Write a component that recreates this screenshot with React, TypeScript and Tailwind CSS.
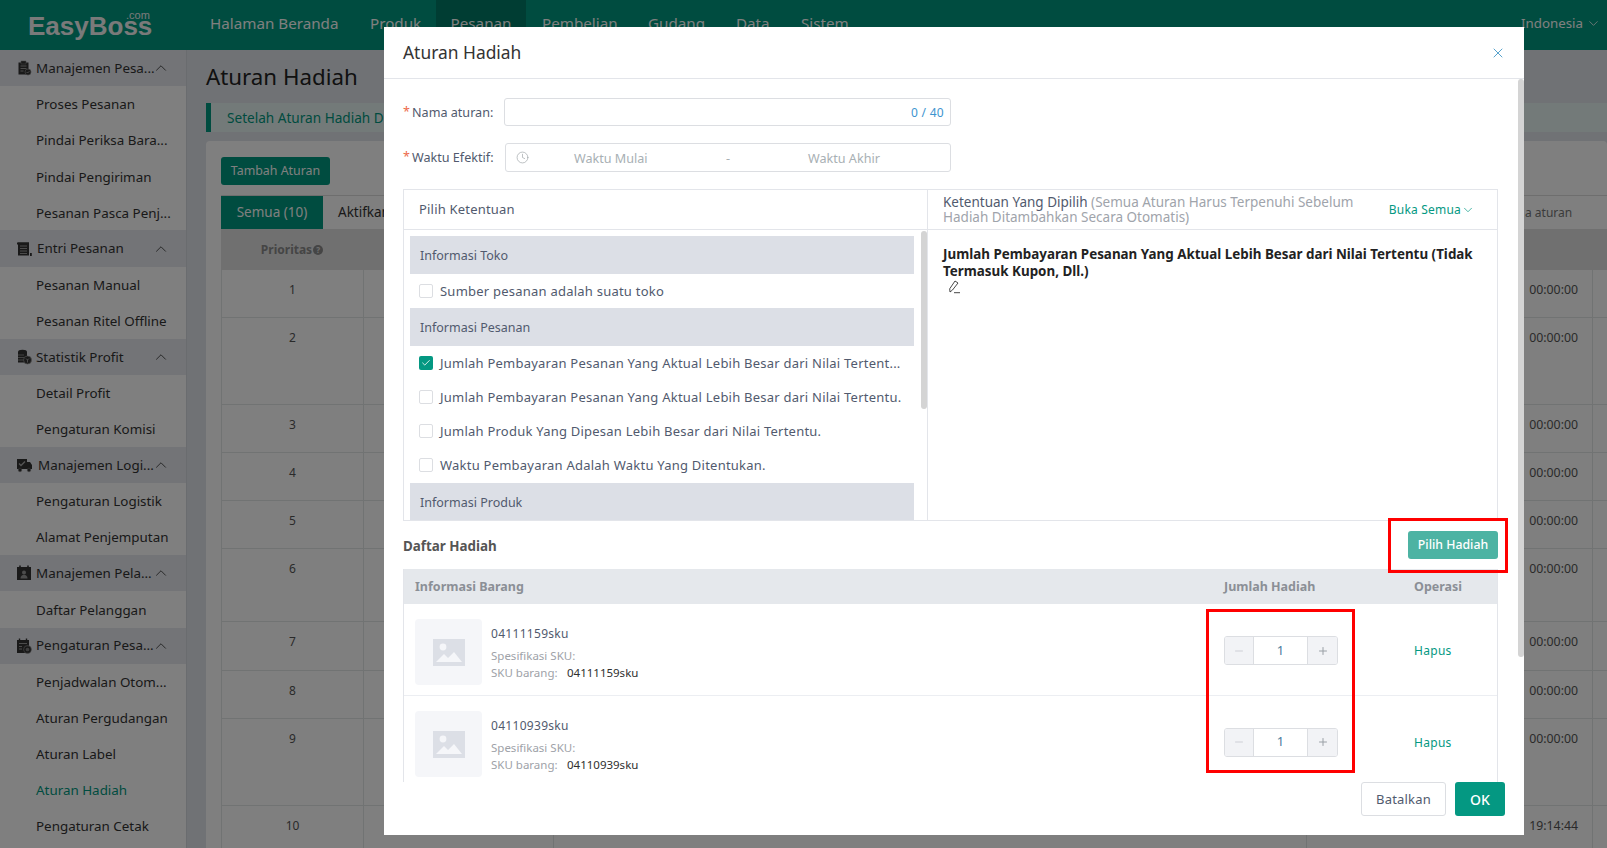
import React from "react";
import { ChevronUp, ChevronDown, Check, X, Clock, Plus, Minus } from "lucide-react";

const Ic = ({ k }: { k: number }) => {
  const paths = [
    <g key="0"><path d="M2.5 2.5h10v12h-10z" fill="#333" /><path d="M5 1h5v3H5z" fill="#333" stroke="#888" strokeWidth=".5" /><path d="M4.5 6h6M4.5 8.5h6M4.5 11h3" stroke="#999" strokeWidth="1" /><circle cx="12" cy="12" r="3" fill="#333" stroke="#888" strokeWidth=".7" /><path d="M10.6 12l1 1 1.8-1.8" stroke="#aaa" strokeWidth=".8" fill="none" /></g>,
    <g key="1"><path d="M2 1.5h11v13H2z" fill="#333" /><path d="M1 1.5h12v2H1z" fill="#333" /><path d="M4 5h7M4 7.5h7M4 10h7M4 12.5h7" stroke="#999" strokeWidth="1" /><rect x="14" y="12" width="1.8" height="3" fill="#333" /></g>,
    <g key="2"><ellipse cx="6.5" cy="3" rx="4.5" ry="2.2" fill="#333" /><path d="M2 3h9v10.5H2z" fill="#333" /><path d="M2 6h6M2 8.5h6M2 11h6" stroke="#999" strokeWidth=".8" /><circle cx="11.5" cy="11" r="4" fill="#333" stroke="#999" strokeWidth=".7" /><path d="M10 9.5l1.5 1.5 1.500-1.500M11.500 11v2.500" stroke="#bbb" strokeWidth=".7" fill="none" /></g>,
    <g key="3"><path d="M1 2h10v10H1z" fill="#333" /><path d="M11 5h3l2 3v4h-5z" fill="#333" /><circle cx="4" cy="13" r="1.8" fill="#333" stroke="#888" strokeWidth=".4" /><circle cx="13" cy="13" r="1.8" fill="#333" stroke="#888" strokeWidth=".4" /><path d="M3 6.5l2 2 4-4" stroke="#aaa" strokeWidth="1.3" fill="none" /></g>,
    <g key="4"><path d="M1 2h14v13H1z" fill="#333" /><path d="M4 .5v3M12 .5v3" stroke="#333" strokeWidth="1.6" /><circle cx="8" cy="7.5" r="2" fill="#999" /><path d="M4.5 13.5c0-5 7-5 7 0z" fill="#999" /></g>,
    <g key="5"><path d="M1 2h12v13H1z" fill="#333" /><path d="M3.5 .5v3M10.5 .5v3" stroke="#333" strokeWidth="1.4" /><path d="M3 5.5h8M3 8.5h3M3 11h3" stroke="#999" strokeWidth="1" /><circle cx="11.5" cy="11.5" r="4.2" fill="#7a7a7a" /><circle cx="11.5" cy="11.5" r="2.6" fill="none" stroke="#333" strokeWidth="1.5" /></g>,
  ];
  return <svg viewBox="0 0 16 16" className="w-[16px] h-[16px] shrink-0">{paths[k]}</svg>;
};

const menu: { t: string; k: number; items: string[] }[] = [
  { t: "Manajemen Pesa...", k: 0, items: ["Proses Pesanan", "Pindai Periksa Bara...", "Pindai Pengiriman", "Pesanan Pasca Penj..."] },
  { t: "Entri Pesanan", k: 1, items: ["Pesanan Manual", "Pesanan Ritel Offline"] },
  { t: "Statistik Profit", k: 2, items: ["Detail Profit", "Pengaturan Komisi"] },
  { t: "Manajemen Logi...", k: 3, items: ["Pengaturan Logistik", "Alamat Penjemputan"] },
  { t: "Manajemen Pela...", k: 4, items: ["Daftar Pelanggan"] },
  { t: "Pengaturan Pesa...", k: 5, items: ["Penjadwalan Otom...", "Aturan Pergudangan", "Aturan Label", "Aturan Hadiah", "Pengaturan Cetak"] },
];

const rows = [
  ["1", 48, "00:00:00"], ["2", 87, "00:00:00"], ["3", 48, "00:00:00"], ["4", 48, "00:00:00"], ["5", 48, "00:00:00"],
  ["6", 73, "00:00:00"], ["7", 49, "00:00:00"], ["8", 48, "00:00:00"], ["9", 87, "00:00:00"], ["10", 60, "19:14:44"],
] as const;

const Placeholder = () => (
  <div className="w-[67px] h-[66px] bg-[#f5f6f9] rounded-[4px] flex items-center justify-center shrink-0">
    <svg viewBox="0 0 32 27" className="w-[32px] h-[27px]">
      <rect width="32" height="27" fill="#dcdfe6" />
      <circle cx="10" cy="8" r="3.4" fill="#f5f6f9" />
      <path d="M3 23l8-8 4 4 6-6 8 10z" fill="#f5f6f9" />
    </svg>
  </div>
);

const Box = ({ on }: { on?: boolean }) =>
  on ? (
    <span className="w-[14px] h-[14px] bg-[#049882] rounded-[2px] flex items-center justify-center shrink-0">
      <Check size={10} strokeWidth={2} color="#fff" />
    </span>
  ) : (
    <span className="w-[14px] h-[14px] bg-white border border-[#dcdee2] rounded-[2px] shrink-0" />
  );

const Group = ({ t, last }: { t: string; last?: boolean }) => (
  <div className={`h-[38px] ml-[6px] mr-[13px] bg-[#dcdfe6] flex items-center pl-[10px] pt-[2px] text-[12.5px] text-[#515a6e] shrink-0 ${last ? "mt-[1px]" : ""}`}>{t}</div>
);
const Opt = ({ t, on }: { t: string; on?: boolean }) => (
  <div className="h-[34px] flex items-center gap-[7px] pl-[15px] text-[13px] tracking-[0.23px] text-[#515a6e] shrink-0 whitespace-nowrap">
    <Box on={on} />
    <span className="pt-[2px]">{t}</span>
  </div>
);

const Stepper = () => (
  <div className="w-[114px] h-[29px] border border-[#dcdee2] rounded-[3px] flex text-[13px] overflow-hidden">
    <div className="w-[29px] bg-[#f2f3f6] flex items-center justify-center border-r border-[#dcdee2]"><Minus size={12} strokeWidth={1.8} color="#c9ccd2" /></div>
    <div className="flex-1 flex items-center justify-center text-[#4a7c9e]">1</div>
    <div className="w-[30px] bg-[#f2f3f6] flex items-center justify-center border-l border-[#dcdee2]"><Plus size={12} strokeWidth={2} color="#9aa0a6" /></div>
  </div>
);

const Gift = ({ sku, first }: { sku: string; first?: boolean }) => (
  <div className={`flex border-b border-[#eceef2] ${first ? "h-[92px]" : "h-[91px]"}`}>
    <div className="flex-1 flex items-start pt-[15px] pl-[11px] gap-[9px]">
      <Placeholder />
      <div className="flex flex-col pt-[6px] text-[#9ea2a8] text-[11.5px] leading-[17px]">
        <div className="text-[12px] tracking-[0.3px] text-[#515a6e] mb-[5px]">{sku}</div>
        <div>Spesifikasi SKU:</div>
        <div className="flex"><span className="w-[76px]">SKU barang:</span><span className="text-[#2f2f2f]">{sku}</span></div>
      </div>
    </div>
    <div className="w-[190px] flex items-center pt-[2px]"><Stepper /></div>
    <div className="w-[83px] flex items-center pt-[3px] text-[12px] tracking-[0.3px] text-[#049882]">Hapus</div>
  </div>
);

export default function App() {
  return (
    <div className="relative w-[1607px] h-[848px] overflow-hidden bg-[#e1e5ea] font-['Noto_Sans',sans-serif] text-[#333]">
      {/* page */}
      <header className="h-[50px] bg-[#009880] flex text-white text-[15.2px] whitespace-nowrap">
        <div className="w-[210px] relative pl-[28px] flex items-center font-['Liberation_Sans',sans-serif] font-bold text-[26px] text-[#f4f4f4]">
          <span className="leading-[20px] mt-[2px]">EasyBoss</span>
          <span className="absolute left-[126px] top-[11px] text-[11px] font-normal leading-[8px]">.com</span>
        </div>
        <nav className="flex-1 flex items-center">
          <span className="w-[160px] pb-[4px]">Halaman Beranda</span>
          <span className="w-[66px] pb-[4px]">Produk</span>
          <span className="w-[90px] h-full flex items-center justify-center bg-[#007a67] pb-[4px]">Pesanan</span>
          <span className="ml-[16px] w-[106px] pb-[4px]">Pembelian</span>
          <span className="w-[88px] pb-[4px]">Gudang</span>
          <span className="w-[65px] pb-[4px]">Data</span>
          <span className="pb-[4px]">Sistem</span>
        </nav>
        <div className="flex items-center gap-[3px] pr-[6px] pb-[3px] text-[13.3px]">Indonesia <ChevronDown size={15} strokeWidth={1.3} /></div>
      </header>
      <div className="flex h-[798px]">
        <aside className="w-[187px] bg-white border-r border-[#d5d8de] text-[13.4px] shrink-0">
          {menu.map((g) => (
            <div key={g.t}>
              <div className="h-[36.1px] bg-[#e6e8ee] flex items-center pl-[16px] pr-[16px] gap-[4px]">
                <Ic k={g.k} />
                <span className={`flex-1 min-w-0 whitespace-nowrap ${g.k === 3 ? "pl-[2px]" : g.k === 1 ? "pl-[1px]" : ""}`}>{g.t}</span>
                <ChevronUp size={18} strokeWidth={1.1} color="#333" className="shrink-0" />
              </div>
              {g.items.map((i) => (
                <div key={i} className={`h-[36.1px] flex items-center pl-[36px] pt-[0.5px] whitespace-nowrap ${i === "Aturan Hadiah" ? "text-[#009880]" : ""}`}>{i}</div>
              ))}
            </div>
          ))}
        </aside>
        <main className="flex-1 min-w-0 pl-[19px]">
          <h1 className="h-[53px] flex items-center text-[22.3px] text-[#222]">Aturan Hadiah</h1>
          <div className="h-[29px] bg-[#e7f5f2] border-l-[5px] border-[#009880] flex items-center pl-[16px] pt-[2px] text-[13.6px] text-[#009880] whitespace-nowrap">Setelah Aturan Hadiah Ditambahkan</div>
          <div className="mt-[9px] bg-white rounded-[4px] pl-[15px] pt-[16px]">
            <div className="w-[109px] h-[28px] bg-[#009880] rounded-[3px] text-white text-[12.4px] pt-[1px] flex items-center justify-center">Tambah Aturan</div>
            <div className="mt-[10px] h-[34px] flex items-center text-[13.5px] border-t border-[#ddd] whitespace-nowrap">
              <div className="w-[102px] h-full bg-[#009880] text-white flex items-center justify-center shrink-0">Semua (10)</div>
              <div className="pl-[15px] w-[1202px] shrink-0">Aktifkan</div>
              <div className="text-[12px] text-[#777] shrink-0">a aturan</div>
            </div>
            <div className="h-[41px] bg-[#e0e0e0] flex items-center">
              <div className="w-[142px] flex items-center justify-center gap-[1px] text-[12px] font-bold text-[#8a8a8a]">
                Prioritas
                <span className="w-[10px] h-[10px] rounded-full bg-[#8a8a8a] text-[#e0e0e0] text-[8px] leading-[10px] text-center">?</span>
              </div>
            </div>
            {rows.map(([n, h, t]) => (
              <div key={n} className="flex border-b border-[#e2e6e6] text-[12px] text-[#555]" style={{ height: h }}>
                <div className="w-[142px] border-l border-[#e2e6e6] pt-[11px] text-center">{n}</div>
                <div className="w-[190px] border-l border-[#e2e6e6]" />
                <div className="w-[753px] border-l border-[#e2e6e6]" />
                <div className="w-[286px] border-l border-[#e2e6e6] pt-[11px] pr-[14px] text-right text-[12.3px]">{t}</div>
                <div className="flex-1 border-l border-[#e2e6e6]" />
              </div>
            ))}
          </div>
        </main>
      </div>

      <div className="absolute inset-0 bg-black/50" />

      {/* modal */}
      <div className="absolute left-[384px] top-[27px] w-[1140px] h-[808px] bg-white flex flex-col text-[#515a6e]">
        <div className="h-[52px] border-b border-[#e3e5ea] flex items-center justify-between pl-[19px] pr-[18px] shrink-0">
          <span className="text-[17.4px] text-[#333]">Aturan Hadiah</span>
          <X size={16} strokeWidth={1.2} color="#2d8cc0" />
        </div>
        <div className="relative flex-1 min-h-0 overflow-hidden pl-[19px] pr-[26px] pt-[19px]">
          <div className="flex items-center h-[28px] text-[12.6px]">
            <span className="w-[9px] text-[#ed6a4a]">*</span>
            <span className="w-[92px] whitespace-nowrap pt-[2px]">Nama aturan:</span>
            <div className="w-[447px] h-full border border-[#dcdee2] rounded-[3px] flex items-center justify-end pr-[6px] pt-[1px] text-[12px] tracking-[0.3px] text-[#3d94cf]">0 / 40</div>
          </div>
          <div className="flex items-center h-[29px] mt-[17px] text-[12.6px]">
            <span className="w-[9px] text-[#ed6a4a]">*</span>
            <span className="w-[93px] whitespace-nowrap pt-[1px]">Waktu Efektif:</span>
            <div className="w-[446px] h-full border border-[#dcdee2] rounded-[3px] flex items-center pl-[10px] text-[#a8b0b4]">
              <Clock size={13} strokeWidth={1.2} color="#9aa0a4" />
              <span className="ml-[45px] w-[152px] pt-[3px]">Waktu Mulai</span>
              <span className="w-[82px] pt-[3px]">-</span>
              <span className="pt-[3px]">Waktu Akhir</span>
            </div>
          </div>
          <div className="mt-[17px] w-[1095px] h-[332px] border border-[#e3e5ea] flex">
            <div className="w-[524px] border-r border-[#e3e5ea] flex flex-col relative">
              <div className="h-[40px] border-b border-[#e3e5ea] flex items-center pl-[15px] pt-[1px] text-[13px] tracking-[0.2px] shrink-0">Pilih Ketentuan</div>
              <div className="flex-1 min-h-0 overflow-hidden pt-[6px] flex flex-col">
                <Group t="Informasi Toko" />
                <Opt t="Sumber pesanan adalah suatu toko" />
                <Group t="Informasi Pesanan" />
                <Opt on t="Jumlah Pembayaran Pesanan Yang Aktual Lebih Besar dari Nilai Tertent..." />
                <Opt t="Jumlah Pembayaran Pesanan Yang Aktual Lebih Besar dari Nilai Tertentu." />
                <Opt t="Jumlah Produk Yang Dipesan Lebih Besar dari Nilai Tertentu." />
                <Opt t="Waktu Pembayaran Adalah Waktu Yang Ditentukan." />
                <Group last t="Informasi Produk" />
              </div>
              <div className="absolute right-0 top-[41px] w-[6px] h-[178px] bg-[#d4d4d4] rounded-[3px]" />
            </div>
            <div className="flex-1 flex flex-col">
              <div className="h-[40px] border-b border-[#e3e5ea] flex items-center pl-[15px] pr-[22px] shrink-0">
                <div className="w-[426px] text-[13.5px] leading-[15px]">Ketentuan Yang Dipilih <span className="text-[#a0a4ab]">(Semua Aturan Harus Terpenuhi Sebelum Hadiah Ditambahkan Secara Otomatis)</span></div>
                <div className="ml-auto flex items-center text-[12px] tracking-[0.2px] text-[#049882] whitespace-nowrap">Buka Semua<ChevronDown size={14} strokeWidth={1.2} /></div>
              </div>
              <div className="pl-[15px] pr-[20px] pt-[16px] text-[13.4px] leading-[17px] font-bold text-[#222]">
                Jumlah Pembayaran Pesanan Yang Aktual Lebih Besar dari Nilai Tertentu (Tidak Termasuk Kupon, Dll.)
                <div className="pl-[5px]">
                  <svg viewBox="0 0 14 14" className="w-[14px] h-[14px]" fill="none" stroke="#333" strokeWidth=".9"><path d="M7 1l3 2-5.500 7-2.500 2-.3-3.200zM6 12.700h6" /></svg>
                </div>
              </div>
            </div>
          </div>
          <div className="flex items-center justify-between h-[48px]">
            <span className="text-[13.4px] font-bold text-[#555] pt-[3px]">Daftar Hadiah</span>
            <div className="w-[90px] h-[28px] bg-[#4db3a3] rounded-[3px] text-white text-[12.3px] font-medium pt-[1px] flex items-center justify-center">Pilih Hadiah</div>
          </div>
          <div className="w-[1095px] border-x border-[#e3e5ea] h-[300px]">
            <div className="h-[35px] bg-[#e5e8ec] flex items-center pt-[1px] text-[12.5px] font-bold text-[#8b8f96]">
              <div className="flex-1 pl-[11px]">Informasi Barang</div>
              <div className="w-[190px]">Jumlah Hadiah</div>
              <div className="w-[83px]">Operasi</div>
            </div>
            <Gift first sku="04111159sku" />
            <Gift sku="04110939sku" />
          </div>
          <div className="absolute right-0 top-0 w-[6px] h-[578px] bg-[#d4d4d4] rounded-[3px]" />
        </div>
        <div className="h-[53px] shrink-0 flex justify-end gap-[9px] pr-[19px] bg-white">
          <div className="w-[85px] h-[34px] border border-[#dcdee2] rounded-[3px] flex items-center justify-center pt-[1px] text-[13px] tracking-[0.2px]">Batalkan</div>
          <div className="w-[50px] h-[34px] bg-[#049882] rounded-[3px] flex items-center justify-center text-white text-[14px] font-medium">OK</div>
        </div>
      </div>

      {/* annotations */}
      <div className="absolute left-[1388px] top-[518px] w-[120px] h-[55px] border-[3px] border-[#ff0000]" />
      <div className="absolute left-[1206px] top-[609px] w-[149px] h-[164px] border-[3px] border-[#ff0000]" />
    </div>
  );
}
